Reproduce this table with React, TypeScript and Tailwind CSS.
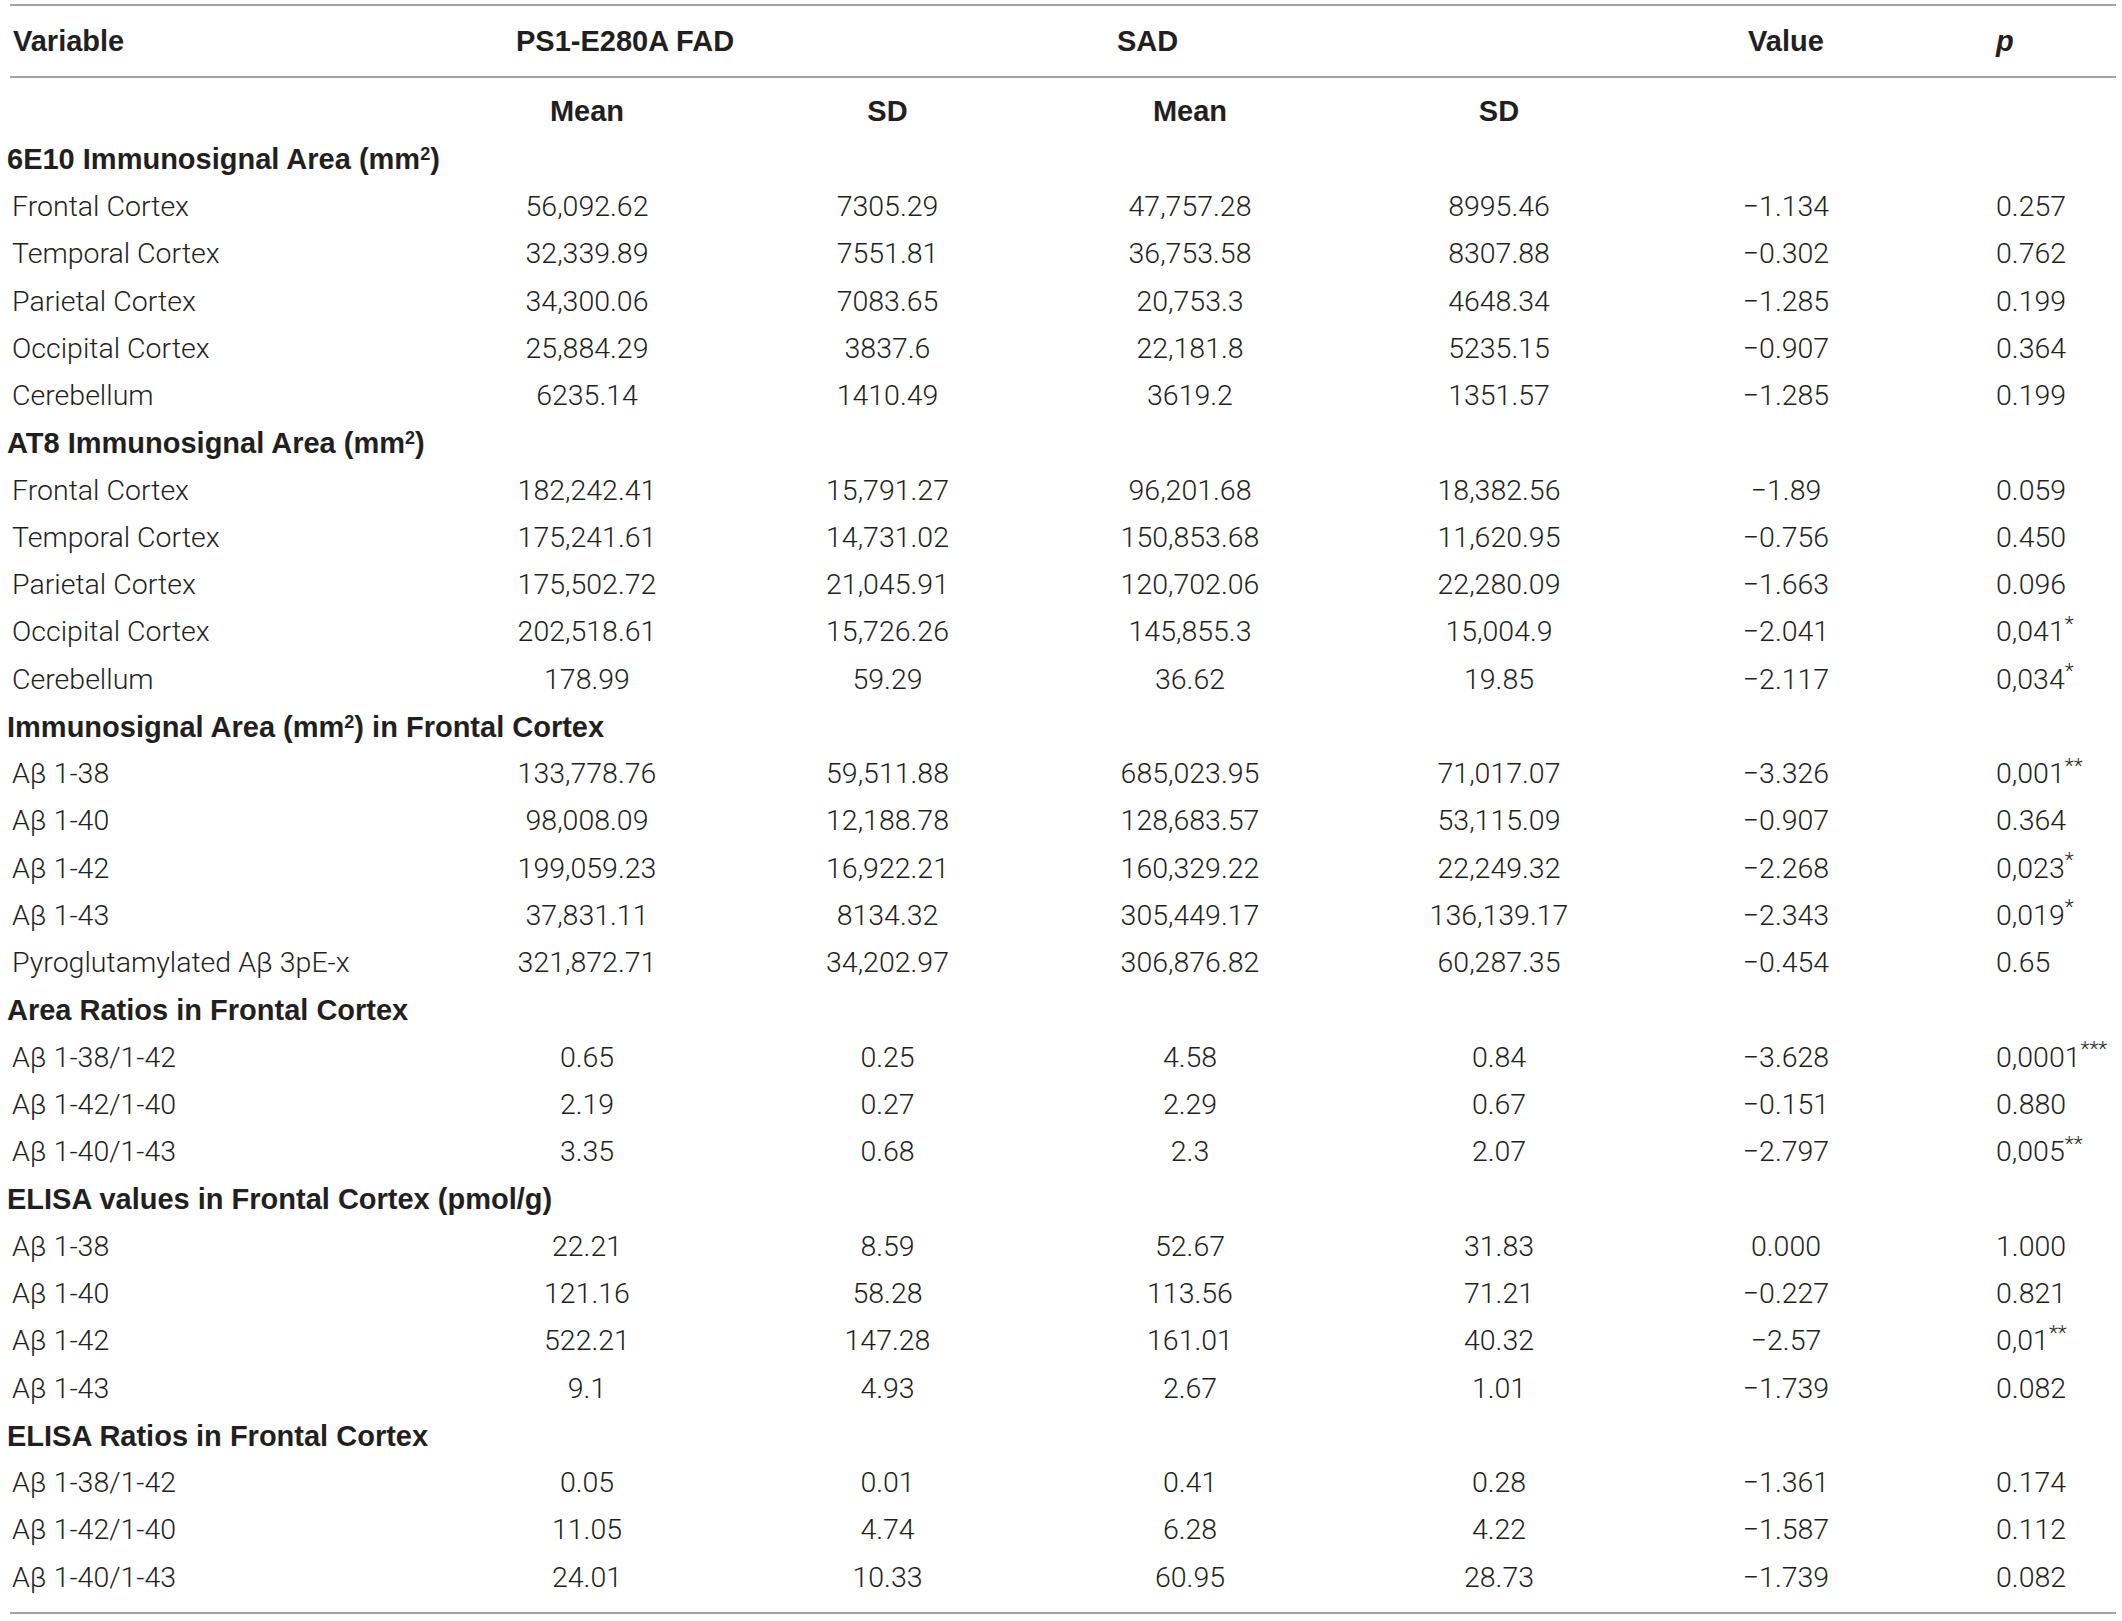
import type { ReactNode } from 'react'

type Vals = [string, string, string, string, string, ReactNode]
type Item = { section: ReactNode } | { label: string; v: Vals }

const grid = 'grid grid-cols-[496px_162px_439px_166px_452px_122px_269px] items-center'
const bold = "font-['Liberation_Sans',Arial,sans-serif] font-bold text-[29px]"

const Sup = ({ children }: { children: ReactNode }) => (
  <sup className="text-[18px]">{children}</sup>
)

const star = (n: string, s: string) => (
  <>
    {n}
    <sup className="text-[21px]">{s}</sup>
  </>
)

const mm2 = (
  <>
    (mm<Sup>2</Sup>)
  </>
)

const rows: Item[] = [
  { section: <>6E10 Immunosignal Area {mm2}</> },
  { label: 'Frontal Cortex', v: ['56,092.62', '7305.29', '47,757.28', '8995.46', '−1.134', '0.257'] },
  { label: 'Temporal Cortex', v: ['32,339.89', '7551.81', '36,753.58', '8307.88', '−0.302', '0.762'] },
  { label: 'Parietal Cortex', v: ['34,300.06', '7083.65', '20,753.3', '4648.34', '−1.285', '0.199'] },
  { label: 'Occipital Cortex', v: ['25,884.29', '3837.6', '22,181.8', '5235.15', '−0.907', '0.364'] },
  { label: 'Cerebellum', v: ['6235.14', '1410.49', '3619.2', '1351.57', '−1.285', '0.199'] },
  { section: <>AT8 Immunosignal Area {mm2}</> },
  { label: 'Frontal Cortex', v: ['182,242.41', '15,791.27', '96,201.68', '18,382.56', '−1.89', '0.059'] },
  { label: 'Temporal Cortex', v: ['175,241.61', '14,731.02', '150,853.68', '11,620.95', '−0.756', '0.450'] },
  { label: 'Parietal Cortex', v: ['175,502.72', '21,045.91', '120,702.06', '22,280.09', '−1.663', '0.096'] },
  { label: 'Occipital Cortex', v: ['202,518.61', '15,726.26', '145,855.3', '15,004.9', '−2.041', star('0,041', '*')] },
  { label: 'Cerebellum', v: ['178.99', '59.29', '36.62', '19.85', '−2.117', star('0,034', '*')] },
  { section: <>Immunosignal Area {mm2} in Frontal Cortex</> },
  { label: 'Aβ 1-38', v: ['133,778.76', '59,511.88', '685,023.95', '71,017.07', '−3.326', star('0,001', '**')] },
  { label: 'Aβ 1-40', v: ['98,008.09', '12,188.78', '128,683.57', '53,115.09', '−0.907', '0.364'] },
  { label: 'Aβ 1-42', v: ['199,059.23', '16,922.21', '160,329.22', '22,249.32', '−2.268', star('0,023', '*')] },
  { label: 'Aβ 1-43', v: ['37,831.11', '8134.32', '305,449.17', '136,139.17', '−2.343', star('0,019', '*')] },
  { label: 'Pyroglutamylated Aβ 3pE-x', v: ['321,872.71', '34,202.97', '306,876.82', '60,287.35', '−0.454', '0.65'] },
  { section: 'Area Ratios in Frontal Cortex' },
  { label: 'Aβ 1-38/1-42', v: ['0.65', '0.25', '4.58', '0.84', '−3.628', star('0,0001', '***')] },
  { label: 'Aβ 1-42/1-40', v: ['2.19', '0.27', '2.29', '0.67', '−0.151', '0.880'] },
  { label: 'Aβ 1-40/1-43', v: ['3.35', '0.68', '2.3', '2.07', '−2.797', star('0,005', '**')] },
  { section: 'ELISA values in Frontal Cortex (pmol/g)' },
  { label: 'Aβ 1-38', v: ['22.21', '8.59', '52.67', '31.83', '0.000', '1.000'] },
  { label: 'Aβ 1-40', v: ['121.16', '58.28', '113.56', '71.21', '−0.227', '0.821'] },
  { label: 'Aβ 1-42', v: ['522.21', '147.28', '161.01', '40.32', '−2.57', star('0,01', '**')] },
  { label: 'Aβ 1-43', v: ['9.1', '4.93', '2.67', '1.01', '−1.739', '0.082'] },
  { section: 'ELISA Ratios in Frontal Cortex' },
  { label: 'Aβ 1-38/1-42', v: ['0.05', '0.01', '0.41', '0.28', '−1.361', '0.174'] },
  { label: 'Aβ 1-42/1-40', v: ['11.05', '4.74', '6.28', '4.22', '−1.587', '0.112'] },
  { label: 'Aβ 1-40/1-43', v: ['24.01', '10.33', '60.95', '28.73', '−1.739', '0.082'] },
]

const Rule = () => <div className="h-[2px] bg-[#a3a3a3]" />

export default function App() {
  return (
    <div className="min-h-screen bg-white text-[#231f20] font-['Roboto',sans-serif] text-[28.5px] leading-none">
      <div className="ml-[10px] w-[2106px] pt-[4px]">
        <Rule />
        <div className={`${grid} h-[70px] ${bold}`}>
          <div className="pl-[3px]">Variable</div>
          <div className="col-span-2 pl-[10px]">PS1-E280A FAD</div>
          <div className="col-span-2 pl-[10px]">SAD</div>
          <div className="text-center">Value</div>
          <div className="pl-[149px] italic">p</div>
        </div>
        <Rule />
        <div className={`${grid} h-[58.35px] pt-[8px] ${bold}`}>
          <div />
          <div className="text-center">Mean</div>
          <div className="text-center">SD</div>
          <div className="text-center">Mean</div>
          <div className="text-center">SD</div>
          <div />
          <div />
        </div>
        {rows.map((r, i) =>
          'section' in r ? (
            <div key={i} className={`flex h-[47.28px] items-center -ml-[3px] ${bold}`}>
              <span>{r.section}</span>
            </div>
          ) : (
            <div key={i} className={`${grid} h-[47.28px] font-light`}>
              <div className="pl-[2px]">{r.label}</div>
              <div className="text-center">{r.v[0]}</div>
              <div className="text-center">{r.v[1]}</div>
              <div className="text-center">{r.v[2]}</div>
              <div className="text-center">{r.v[3]}</div>
              <div className="text-center">{r.v[4]}</div>
              <div className="pl-[149px]">{r.v[5]}</div>
            </div>
          )
        )}
        <div className="mt-[10px]">
          <Rule />
        </div>
      </div>
    </div>
  )
}
